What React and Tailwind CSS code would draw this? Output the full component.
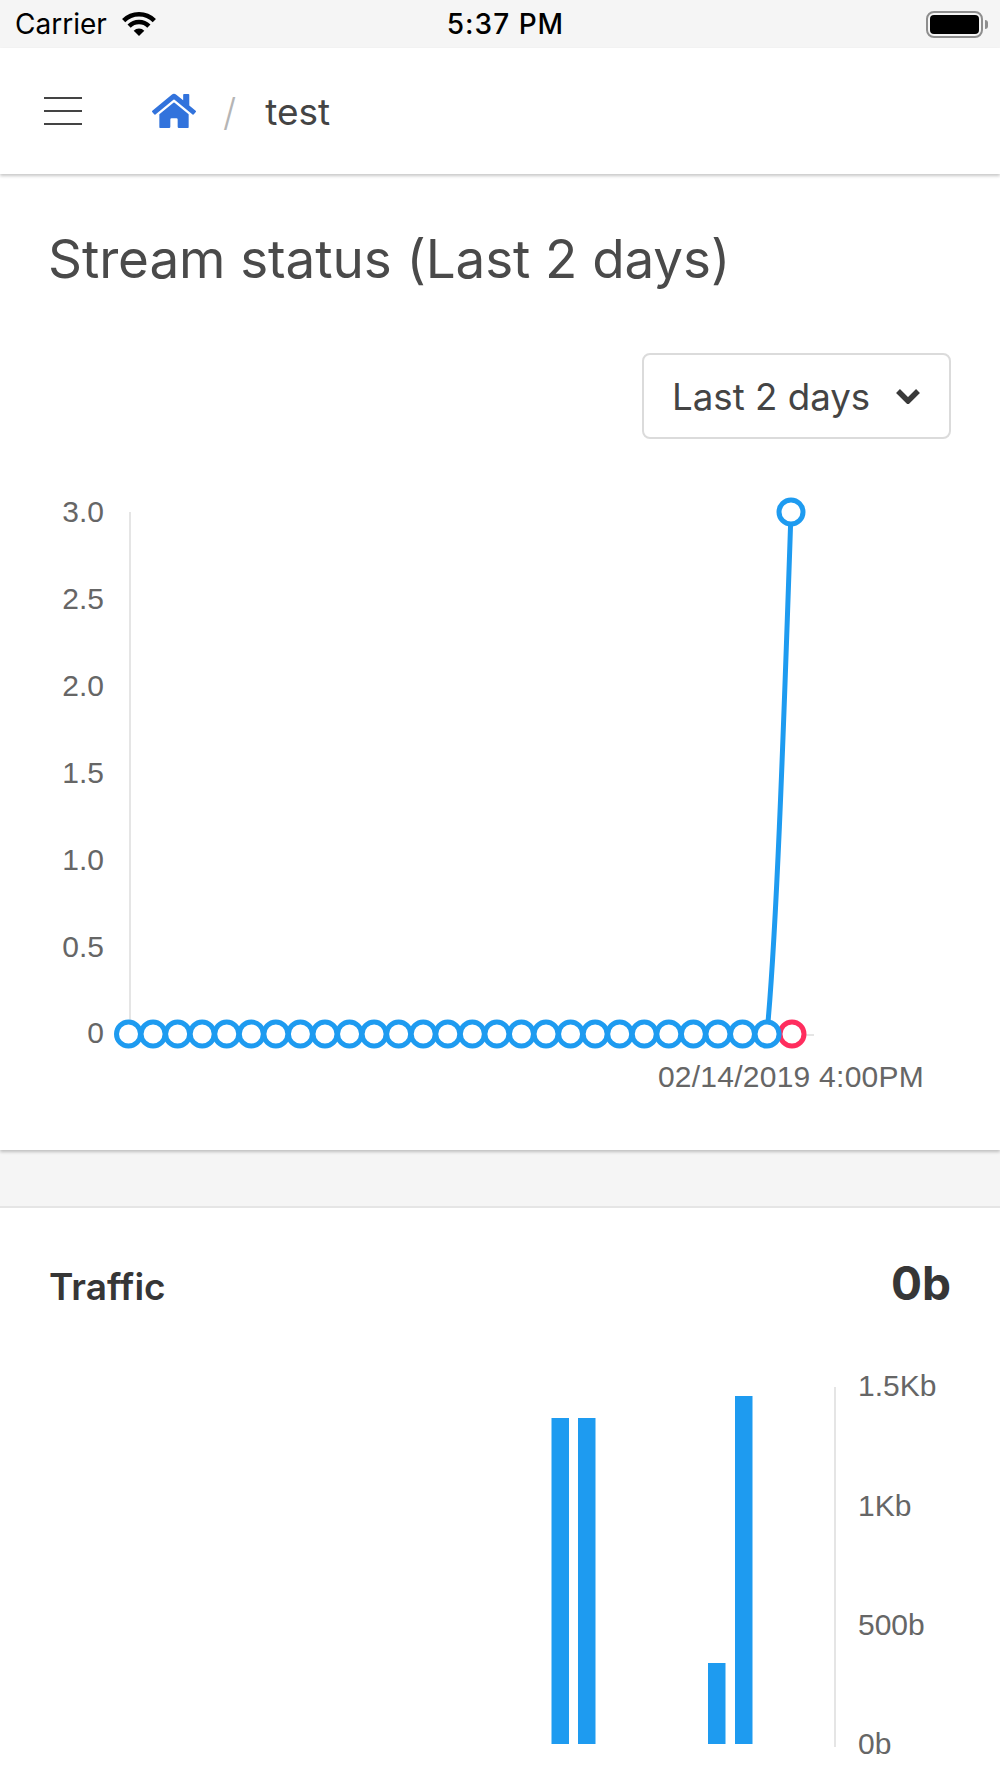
import React from "react";
import { FaHome } from "react-icons/fa";

const BLUE = "#1e9bf0";
const LABEL = "#666666";
const CHART_FONT = "'Liberation Sans', Arial, sans-serif";

function WifiIcon() {
  return (
    <svg width="34" height="24" viewBox="0 0 34 24" fill="none" stroke="#000" strokeWidth="4.5">
      <path d="M1.66 8.66A21.7 21.7 0 0 1 32.34 8.66" />
      <path d="M7.1 14.1A14 14 0 0 1 26.9 14.1" />
      <path d="M11.7 18.7A7.5 7.5 0 0 1 22.3 18.7L17 24Z" fill="#000" stroke="none" />
    </svg>
  );
}

function StatusBar() {
  return (
    <div className="h-12 bg-[#f5f5f5] grid grid-cols-3 items-center text-black text-[28px] pl-[15px] pr-3">
      <div className="flex items-center gap-[15px]">
        <span>Carrier</span>
        <WifiIcon />
      </div>
      <div className="text-center font-medium tracking-[1px] pl-[8px]">5:37 PM</div>
      <div className="flex justify-end items-center">
        <div className="w-[57px] h-[27px] rounded-[8px] border-2 border-[#8e8e8e] p-[2px]">
          <div className="w-full h-full bg-black rounded-[4px]" />
        </div>
        <div className="w-[3px] h-[9px] ml-[2px] bg-[#8e8e8e] rounded-r-full" />
      </div>
    </div>
  );
}

function NavBar() {
  return (
    <div className="h-[126px] bg-white flex items-center shadow-[0_2px_3px_rgba(0,0,0,0.22)] relative">
      <div className="w-[38px] ml-[44px] flex flex-col gap-[11px]">
        <div className="h-[2px] bg-[#444]" />
        <div className="h-[2px] bg-[#444]" />
        <div className="h-[2px] bg-[#444]" />
      </div>
      <FaHome className="ml-[70px] text-[#3273dc]" size={44} />
      <span className="ml-[27px] pt-[2px] text-[38px] text-[#b5b5b5] font-light">/</span>
      <span className="ml-[29px] pt-[2px] text-[37px] text-[#444]">test</span>
    </div>
  );
}

function StatusChart() {
  const dots = [];
  for (let i = 0; i < 27; i++) dots.push(128.5 + i * 24.56);
  const yLabels = [
    ["3.0", 512],
    ["2.5", 599],
    ["2.0", 686],
    ["1.5", 773],
    ["1.0", 860],
    ["0.5", 947],
    ["0", 1033],
  ];
  return (
    <svg className="block w-full h-[650px]" viewBox="0 480 1000 650" fontFamily={CHART_FONT}>
      <line x1="130" y1="512" x2="130" y2="1034" stroke="#e5e5e5" strokeWidth="2" />
      <line x1="130" y1="1035" x2="814" y2="1035" stroke="#e5e5e5" strokeWidth="2" />
      {yLabels.map(([text, y]) => (
        <text key={text} x="104" y={y + 10} textAnchor="end" fontSize="30" fill={LABEL}>
          {text}
        </text>
      ))}
      <path d="M767 1033C776 940 783 750 791 512" fill="none" stroke={BLUE} strokeWidth="5" />
      <circle cx="792" cy="1034" r="12" fill="#fff" stroke="#ff2d5e" strokeWidth="5" />
      {dots.map((x) => (
        <circle key={x} cx={x} cy="1034" r="12" fill="#fff" stroke={BLUE} strokeWidth="5" />
      ))}
      <circle cx="791" cy="512" r="12" fill="#fff" stroke={BLUE} strokeWidth="5" />
      <text x="924" y="1087" textAnchor="end" fontSize="30" letterSpacing="0.25" fill={LABEL}>
        02/14/2019 4:00PM
      </text>
    </svg>
  );
}

function TrafficChart() {
  const bars = [
    { x: 551.5, top: 1418 },
    { x: 578, top: 1418 },
    { x: 708, top: 1663 },
    { x: 735, top: 1396 },
  ];
  const labels = [
    ["1.5Kb", 1386],
    ["1Kb", 1506],
    ["500b", 1625],
    ["0b", 1744],
  ];
  return (
    <svg className="block w-full h-[418px]" viewBox="0 1360 1000 418" fontFamily={CHART_FONT}>
      {bars.map((b) => (
        <rect key={b.x} x={b.x} y={b.top} width="17.5" height={1744 - b.top} fill={BLUE} />
      ))}
      <line x1="835" y1="1387" x2="835" y2="1747" stroke="#e5e5e5" strokeWidth="2" />
      {labels.map(([text, y]) => (
        <text key={text} x="858" y={y + 10} fontSize="30" fill={LABEL}>
          {text}
        </text>
      ))}
    </svg>
  );
}

export default function App() {
  return (
    <div className="h-[1778px] overflow-hidden bg-[#f5f5f5] font-['Inter',sans-serif]">
      <StatusBar />
      <NavBar />

      {/* Stream status card */}
      <div className="h-[976px] bg-white shadow-[0_2px_3px_rgba(0,0,0,0.22)]">
        <h1 className="pt-[55px] pl-[48px] text-[53px] tracking-[-0.1px] leading-[60px] text-[#4a4a4a]">
          Stream status (Last 2 days)
        </h1>
        <div className="flex justify-end pr-[49px] mt-[64px]">
          <div className="w-[309px] h-[86px] border-2 border-[#dbdbdb] rounded-[8px] flex items-center pl-[28px] pt-[2px] text-[36.7px] text-[#444]">
            <span>Last 2 days</span>
            <svg className="ml-[26px] shrink-0 mb-[2px]" width="24" height="16" viewBox="0 0 24 16" fill="none" stroke="#3a3a3a" strokeWidth="5.5">
              <path d="M2 3L12 13L22 3" />
            </svg>
          </div>
        </div>
        <div className="mt-[41px]">
          <StatusChart />
        </div>
      </div>

      {/* Traffic card */}
      <div className="mt-[56px] h-[572px] bg-white border-t-2 border-[#e5e5e5]">
        <div className="flex justify-between items-center h-[69px] mt-[41px] mb-[42px] pl-[49px] pr-[49px]">
          <h2 className="text-[37px] font-semibold text-[#363636] mt-[6px]">Traffic</h2>
          <span className="text-[46px] font-bold text-[#363636]">0b</span>
        </div>
        <TrafficChart />
      </div>
    </div>
  );
}
